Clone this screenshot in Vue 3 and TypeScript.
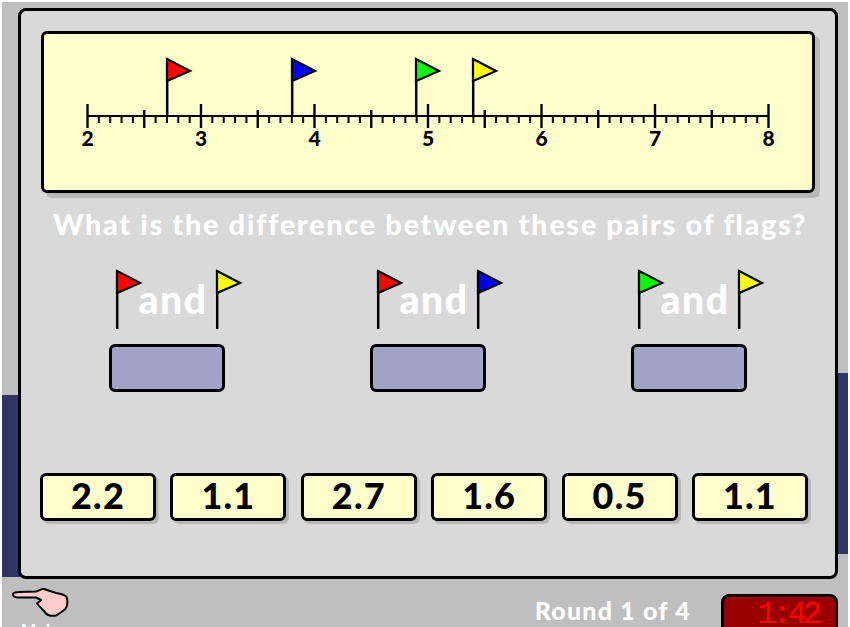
<script setup lang="ts">
const start = 2
const x0 = 87.5
const unit = 113.5
const ticks = Array.from({ length: 61 }, (_, i) => {
  const kind = i % 10 === 0 ? 'major' : i % 5 === 0 ? 'mid' : 'minor'
  return { x: x0 + (i * unit) / 10, top: kind === 'major' ? 104 : kind === 'mid' ? 110 : 116, bottom: kind === 'minor' ? 123 : 128 }
})
const labels = Array.from({ length: 7 }, (_, i) => ({ x: x0 + i * unit, text: String(start + i) }))
const lineFlags = [
  { x: 167, fill: '#ff0000' },
  { x: 292, fill: '#0000ff' },
  { x: 416, fill: '#00ff00' },
  { x: 473, fill: '#ffff00' },
]
const pairs = [
  ['#ff0000', '#ffff00'],
  ['#ff0000', '#0000ff'],
  ['#00ff00', '#ffff00'],
]
const tiles = ['2.2', '1.1', '2.7', '1.6', '0.5', '1.1']
</script>

<template>
  <div class="stage">
    <div class="strip strip-left"></div>
    <div class="strip strip-right"></div>
    <main class="panel">
      <section class="line-box">
        <svg class="line-svg" viewBox="44 34 768 156" width="768" height="156">
          <line :x1="x0" y1="116" :x2="x0 + 6 * unit" y2="116" stroke="#000" stroke-width="2.2" />
          <line v-for="(t, i) in ticks" :key="i" :x1="t.x" :x2="t.x" :y1="t.top" :y2="t.bottom" stroke="#000" :stroke-width="t.bottom === 128 ? 2.4 : 2" />
          <text v-for="l in labels" :key="l.text" :x="l.x" y="146" text-anchor="middle" class="tick-label">{{ l.text }}</text>
          <g v-for="f in lineFlags" :key="f.x" :transform="`translate(${f.x} 59)`">
            <line x1="0.2" y1="0" x2="0.2" y2="58" stroke="#000" stroke-width="2.5" />
            <path d="M0 0 L23 12 L0 22 Z" :fill="f.fill" stroke="#000" stroke-width="2.2" />
          </g>
        </svg>
      </section>

      <h1 class="question">What is the difference between these pairs of flags?</h1>

      <div class="pairs">
        <div v-for="(p, i) in pairs" :key="i" class="pair">
          <div class="flags">
            <svg class="flag" viewBox="-2 -2 28 62" width="28" height="62">
              <line x1="0.2" y1="0" x2="0.2" y2="58" stroke="#000" stroke-width="2.5" />
              <path d="M0 0 L23 12 L0 22 Z" :fill="p[0]" stroke="#000" stroke-width="2.2" />
            </svg>
            <span class="and">and</span>
            <svg class="flag" viewBox="-2 -2 28 62" width="28" height="62">
              <line x1="0.2" y1="0" x2="0.2" y2="58" stroke="#000" stroke-width="2.5" />
              <path d="M0 0 L23 12 L0 22 Z" :fill="p[1]" stroke="#000" stroke-width="2.2" />
            </svg>
          </div>
          <div class="answer"></div>
        </div>
      </div>

      <div class="tiles">
        <div v-for="(t, i) in tiles" :key="i" class="tile">{{ t }}</div>
      </div>
    </main>

    <footer class="bottom">
      <div class="main-link">
        <svg class="hand" viewBox="0 0 58 30" width="58" height="30">
          <path d="M2 6.5 C2 4.5 4 4 8 4 L25 3.5 C28 3 30 0.5 33 1 L45 5 C49 6 54 6.5 55.5 9 C56.5 12 56.5 17 55 20 C53 23 49 25 45 27.5 C40 28.5 35 27 33.5 23.5 C31 21 28 18 26 15.5 L30 12 L25 9.5 L8 9.5 C4 9.5 2 8.5 2 6.5 Z" fill="#ffcccc" stroke="#000" stroke-width="2" stroke-linejoin="round" />
        </svg>
        <span class="main-text">Main</span>
      </div>
      <div class="status">
        <span class="round">Round 1 of 4</span>
        <div class="timer">1:42</div>
      </div>
    </footer>
  </div>
</template>

<style>
html, body { margin: 0; overflow: hidden; background: #fff; }
</style>

<style scoped>
.stage {
  position: relative;
  box-sizing: border-box;
  width: 846px;
  height: 625px;
  margin: 2px 0 0 2px;
  padding: 6px 10px 0 16px;
  background: #bfbfbf;
  overflow: hidden;
  font-family: "Lato", "Open Sans", sans-serif;
}
.strip { position: absolute; background: #333366; }
.strip-left { left: 0; top: 393px; width: 20px; height: 182px; }
.strip-right { right: 0; top: 371px; width: 14px; height: 181px; }
.panel {
  position: relative;
  box-sizing: border-box;
  height: 571px;
  padding: 20px 20px 0;
  background: #d9d9d9;
  border: 3px solid #000;
  border-radius: 8px;
}
.line-box {
  box-sizing: border-box;
  width: 774px;
  height: 162px;
  background: #ffffcc;
  border: 3px solid #000;
  border-radius: 6px;
  box-shadow: 5px 5px 0 #b8b8b8;
}
.line-svg { display: block; }
.tick-label { font: 900 21px "Lato", sans-serif; fill: #000; }
.question {
  margin: 14px 0 0;
  width: 778px;
  height: 34px;
  line-height: 34px;
  text-align: center;
  color: #fff;
  font-size: 29px;
  font-weight: 900;
  letter-spacing: 1.6px;
  white-space: nowrap;
}
.pairs {
  display: flex;
  gap: 145px;
  margin: 28px 0 0 68px;
}
.pair { width: 116px; display: flex; flex-direction: column; }
.flags {
  width: 128px;
  height: 62px;
  margin-left: 6px;
  display: flex;
  position: relative;
}
.flag { display: block; flex: none; }
.and {
  width: 72px;
  flex: none;
  margin-top: 7px;
  margin-left: -6px;
  margin-right: 6px;
  color: #fff;
  font-size: 39px;
  line-height: 46px;
  font-weight: 900;
  text-align: center;
  letter-spacing: 1.6px;
}
.answer {
  box-sizing: border-box;
  width: 116px;
  height: 48px;
  margin-top: 13px;
  background: #a3a3c8;
  border: 3px solid #000;
  border-radius: 6px;
}
.tiles {
  display: flex;
  justify-content: space-between;
  width: 768px;
  margin: 81px 0 0 -1px;
}
.tile {
  box-sizing: border-box;
  width: 116px;
  height: 48px;
  background: #ffffcc;
  border: 3px solid #000;
  border-radius: 6px;
  box-shadow: 3px 3px 0 #b8b8b8;
  text-align: center;
  font-size: 36px;
  font-weight: 900;
  line-height: 39px;
  letter-spacing: 1.2px;
  color: #000;
}
.bottom {
  display: flex;
  justify-content: space-between;
  height: 48px;
  margin-left: -16px;
}
.main-link { margin: 9px 0 0 9px; position: relative; }
.hand { display: block; }
.main-text {
  position: absolute;
  left: 10px;
  top: 31px;
  color: #fff;
  font-size: 16px;
  font-weight: 700;
  letter-spacing: 1px;
}
.status { display: flex; align-items: flex-start; }
.round {
  margin-top: 17px;
  color: #fff;
  font-size: 25px;
  font-weight: 900;
  line-height: 28px;
  letter-spacing: 1.2px;
  white-space: nowrap;
}
.timer {
  box-sizing: border-box;
  width: 117px;
  height: 60px;
  margin: 15px 0 0 30px;
  padding: 0 17px 0 0;
  background: #990000;
  border: 3px solid #000;
  border-radius: 8px;
  color: #ff0000;
  font-family: "Liberation Mono", monospace;
  font-size: 32px;
  line-height: 36px;
  text-align: right;
  letter-spacing: -4px;
}
</style>
